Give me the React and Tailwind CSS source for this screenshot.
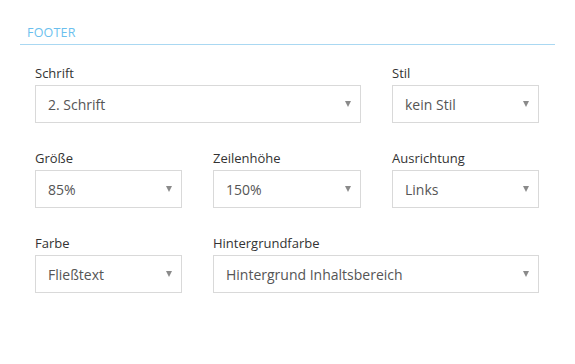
function Select({ value, className = "" }) {
  return (
    <div
      className={`flex items-center justify-between h-[38px] border border-[#d9d9d9] bg-white pl-3 pr-[9px] ${className}`}
    >
      <span className="text-[14px] text-[#555]">{value}</span>
      <span className="w-0 h-0 border-l-[3px] border-r-[3px] border-t-[6px] border-l-transparent border-r-transparent border-t-[#8a8a8a]" />
    </div>
  );
}

function Field({ label, value, className = "" }) {
  return (
    <div className={className}>
      <div className="text-[13px] text-[#333] mb-[3px] leading-[18px]">{label}</div>
      <Select value={value} />
    </div>
  );
}

export default function App() {
  return (
    <div
      className="w-[575px] h-[364px] bg-white pt-[19px]"
      style={{ fontFamily: '"Open Sans", "Liberation Sans", sans-serif' }}
    >
      <div className="ml-[20px] w-[535px] border-b border-[#aad8f2] pl-[7px] pb-[1px]">
        <span className="text-[12.5px] text-[#6bbfee] tracking-[0.2px]">FOOTER</span>
      </div>
      <div className="ml-[35px] w-[504px] mt-[19px] grid grid-cols-[147px_148px_147px] gap-x-[31px] gap-y-[26px]">
        <Field label="Schrift" value="2. Schrift" className="col-span-2" />
        <Field label="Stil" value="kein Stil" />
        <Field label="Größe" value="85%" />
        <Field label="Zeilenhöhe" value="150%" />
        <Field label="Ausrichtung" value="Links" />
        <Field label="Farbe" value="Fließtext" />
        <Field label="Hintergrundfarbe" value="Hintergrund Inhaltsbereich" className="col-span-2" />
      </div>
    </div>
  );
}
